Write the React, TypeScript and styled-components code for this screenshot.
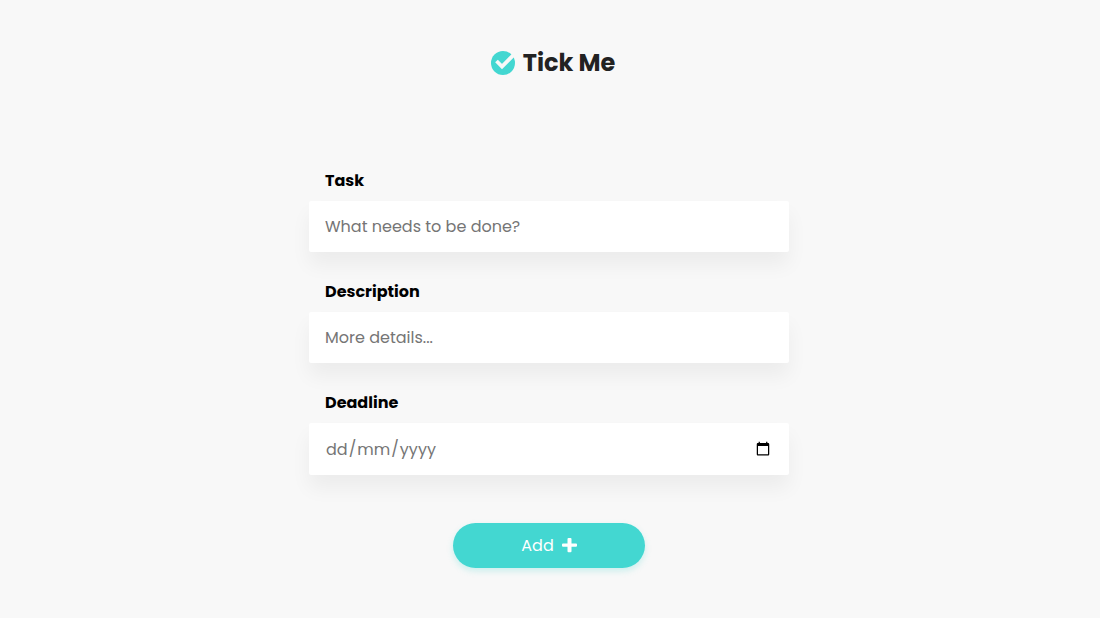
import React from "react";
import styled, { createGlobalStyle } from "styled-components";

const GlobalStyle = createGlobalStyle`
  *, *::before, *::after { box-sizing: border-box; }
  body {
    margin: 0;
    background: #f8f8f8;
    color: #000;
    font-family: Poppins, Inter, "Open Sans", sans-serif;
    font-size: 16px;
    line-height: 24px;
  }
`;

const Page = styled.main`
  display: flex;
  flex-direction: column;
  align-items: center;
  min-height: 100vh;
  padding: 45px 18px 48px 16px;
`;

const Brand = styled.header`
  display: flex;
  align-items: center;
  gap: 8px;
  padding-left: 8px;
  margin-bottom: 88px;
`;

const BrandName = styled.h1`
  margin: 0;
  color: #222;
  font-size: 24px;
  font-weight: 700;
  line-height: 36px;
`;

const Form = styled.form`
  display: flex;
  flex-direction: column;
  gap: 28px;
  width: 100%;
  max-width: 480px;
`;

const Field = styled.div`
  display: flex;
  flex-direction: column;
  gap: 8px;
`;

const Label = styled.label`
  padding-left: 16px;
  font-weight: 700;
`;

const TextInput = styled.input`
  width: 100%;
  height: 51px;
  padding: 0 16px;
  border: 0;
  border-radius: 2px;
  outline: 0;
  background: #fff;
  box-shadow: 0 13px 20px rgba(0, 0, 0, 0.05);
  color: #222;
  font: inherit;

  &::placeholder { color: #757575; opacity: 1; }
`;

/* Day first, then month and year; the separators fill the columns between. */
const DateInput = styled(TextInput)`
  height: 52px;
  color: #757575;

  &::-webkit-datetime-edit { padding: 2px 0 0; }
  &::-webkit-datetime-edit-fields-wrapper {
    display: inline-grid;
    grid-auto-columns: max-content;
  }
  &::-webkit-datetime-edit-text { grid-row: 1; }
  &::-webkit-datetime-edit-day-field { grid-row: 1; grid-column: 1; }
  &::-webkit-datetime-edit-month-field { grid-row: 1; grid-column: 3; }
  &::-webkit-datetime-edit-year-field { grid-row: 1; grid-column: 5; }
`;

const AddButton = styled.button`
  display: flex;
  align-items: center;
  justify-content: center;
  align-self: center;
  gap: 8px;
  width: 40%;
  height: 45px;
  margin-top: 20px;
  padding: 0;
  border: 0;
  border-radius: 24px;
  background: #43d7d1;
  color: #fff;
  box-shadow: 0 3px 6px rgba(67, 216, 208, 0.25);
  font: inherit;
  cursor: pointer;
`;

const TickIcon = () => (
  <svg width="24" height="24" viewBox="0 0 24 24" aria-hidden="true">
    <circle cx="12" cy="12" r="12" fill="#43d7d1" />
    <path d="M5.500 10L11 15.500L22.400 4.100" fill="none" stroke="#f8f8f8" strokeWidth="3.800" />
  </svg>
);

const PlusIcon = () => (
  <svg width="15" height="16" viewBox="0 0 15 16" aria-hidden="true">
    <path
      fill="currentColor"
      d="M6.500 0h2q1 0 1 1V5.500H14q1 0 1 1v1.300q0 1-1 1H9.500V13.300q0 1-1 1h-2q-1 0-1-1V8.800H1q-1 0-1-1V6.500q0-1 1-1H5.500V1q0-1 1-1z"
    />
  </svg>
);

export default function App() {
  return (
    <>
      <GlobalStyle />
      <Page>
        <Brand>
          <TickIcon />
          <BrandName>Tick Me</BrandName>
        </Brand>
        <Form onSubmit={(e) => e.preventDefault()}>
          <Field>
            <Label htmlFor="task">Task</Label>
            <TextInput id="task" type="text" placeholder="What needs to be done?" />
          </Field>
          <Field>
            <Label htmlFor="description">Description</Label>
            <TextInput id="description" type="text" placeholder="More details..." />
          </Field>
          <Field>
            <Label htmlFor="deadline">Deadline</Label>
            <DateInput id="deadline" type="date" />
          </Field>
          <AddButton type="submit">
            Add
            <PlusIcon />
          </AddButton>
        </Form>
      </Page>
    </>
  );
}
